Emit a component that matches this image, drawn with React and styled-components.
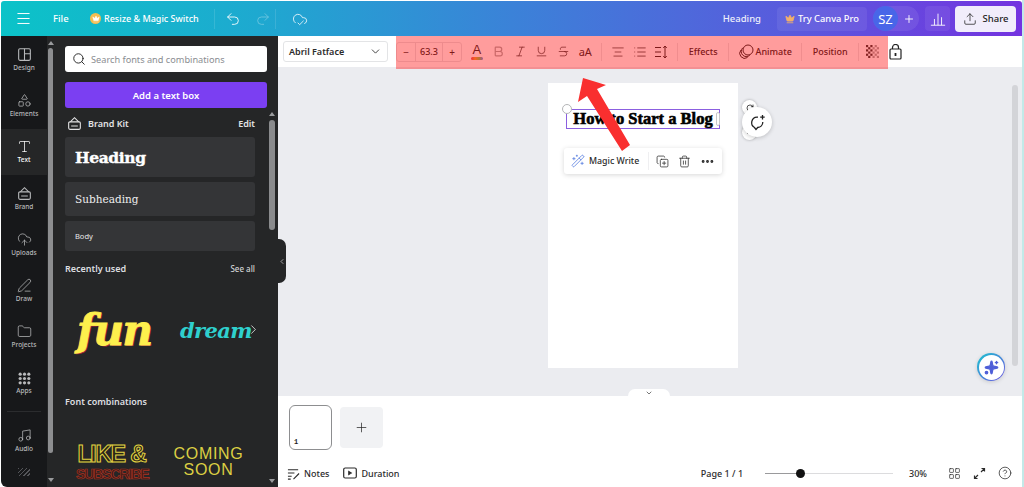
import React from "react";
import styled, { createGlobalStyle } from "styled-components";
import {
  AlignCenter, Bold, ChevronDown, ChevronLeft, ChevronRight, CircleHelp,
  CloudCheck, CloudUpload, CopyPlus, Crown, Ellipsis, Folder, Italic, LayoutGrid, List,
  Menu, Music, PenLine, Plus, Redo2, RotateCw, Search, Shapes, Sparkles,
  Strikethrough, Trash2, Type, Underline, Undo2, Upload, WandSparkles,
} from "lucide-react";

const GlobalStyle = createGlobalStyle`
  html, body { margin: 0; padding: 0; background: #fff; }
  body { font-family: "Noto Sans", "Open Sans", sans-serif; overflow: hidden; }
  * { box-sizing: border-box; }
`;

const BrandIcon = () => (
  <svg width="15" height="15" viewBox="0 0 18 18" fill="none" stroke="currentColor" strokeWidth="1.3">
    <rect x="2" y="7" width="14" height="9" rx="1.5" />
    <path d="M4 7l5-5 5 5M5 12h8" />
  </svg>
);
const DesignIcon = () => (
  <svg width="15" height="15" viewBox="0 0 18 18" fill="none" stroke="currentColor" strokeWidth="1.3">
    <rect x="2" y="2" width="14" height="14" rx="1.5" />
    <path d="M9 2v14M9 8h7" />
  </svg>
);
const DotsIcon = () => (
  <svg width="13" height="13" viewBox="0 0 18 18" fill="currentColor">
    {[3, 9, 15].flatMap((y) => [3, 9, 15].map((x) => <circle key={x + "-" + y} cx={x} cy={y} r="2.2" />))}
  </svg>
);
const NotesIcon = () => (
  <svg width="13" height="13" viewBox="0 0 14 14" fill="none" stroke="currentColor" strokeWidth="1.2">
    <path d="M1 3h11M1 6.500h7M1 10h4M1 13h3M7 13l6-6" />
  </svg>
);
const PlayBoxIcon = () => (
  <svg width="14" height="14" viewBox="0 0 14 14" fill="none" stroke="currentColor" strokeWidth="1.2">
    <rect x="0.700" y="2" width="12.600" height="10" rx="1.500" />
    <path d="M5.800 5.500v3l2.400-1.500z" fill="currentColor" />
  </svg>
);
const ExpandIcon = () => (
  <svg width="13" height="13" viewBox="0 0 13 13" fill="none" stroke="currentColor" strokeWidth="1.2">
    <path d="M8.500 1.500h3v3M11.500 1.500L8 5M4.500 11.500h-3v-3M1.500 11.500L5 8" />
  </svg>
);
const ChartIcon = () => (
  <svg width="16" height="16" viewBox="0 0 18 18" fill="none" stroke="currentColor" strokeWidth="1">
    <path d="M1 16h16M5 16V9M9 16V3M13 16V7" />
  </svg>
);
const SpacingIcon = () => (
  <svg width="14" height="14" viewBox="0 0 14 14" fill="none" stroke="currentColor" strokeWidth="1">
    <path d="M1 2.500h6M1 7h6M1 11.500h6M11 1v12M9.300 3L11 1l1.700 2M9.300 11l1.700 2 1.700-2" />
  </svg>
);
const CheckerIcon = () => (
  <svg width="13" height="13" viewBox="0 0 12 12" fill="#3a3a3a">
    {[0, 2, 4, 6, 8, 10].flatMap((y, r) =>
      [0, 2, 4, 6, 8, 10]
        .filter((_, c) => (c + r) % 2 === 0)
        .map((x) => <rect key={x + "-" + y} x={x} y={y} width="2" height="2" opacity={x > 5 ? 0.45 : 1} />)
    )}
  </svg>
);
const RingsIcon = () => (
  <svg width="15" height="15" viewBox="0 0 15 15" fill="none" stroke="currentColor" strokeWidth="1">
    <circle cx="9" cy="6" r="5" />
    <path d="M3.800 3.800a5 5 0 0 0 7 7.400M2 6a5 5 0 0 0 6.500 7.500" />
  </svg>
);
const CommentIcon = () => (
  <svg width="17" height="17" viewBox="0 0 17 17" fill="none" stroke="#222" strokeWidth="1.3">
    <path d="M9 3.200H8a5.500 5.500 0 0 0-2.500 10.300L7 15.500l1.700-2A5.500 5.500 0 0 0 13.800 8" />
    <path d="M13.500 1v4.500M11.200 3.200h4.500" />
  </svg>
);
const PadlockIcon = () => (
  <svg width="13" height="16" viewBox="0 0 13 16" fill="none" stroke="#222" strokeWidth="1.2">
    <rect x="1" y="5" width="11" height="10" rx="1" />
    <path d="M3.500 5V3.500a3 3 0 0 1 6 0V5" />
    <path d="M6.500 9v3" strokeWidth="1.800" />
  </svg>
);

const railItems = [
  { label: "Design", icon: <DesignIcon /> },
  { label: "Elements", icon: <Shapes size={15} strokeWidth={1.2} /> },
  { label: "Text", icon: <Type size={15} strokeWidth={1.2} />, active: true },
  { label: "Brand", icon: <BrandIcon /> },
  { label: "Uploads", icon: <CloudUpload size={15} strokeWidth={1.2} /> },
  { label: "Draw", icon: <PenLine size={15} strokeWidth={1.2} /> },
  { label: "Projects", icon: <Folder size={15} strokeWidth={1.2} /> },
  { label: "Apps", icon: <DotsIcon /> },
];

const App = () => {
  return (
    <>
      <GlobalStyle />
      <Frame>
        <TopBar>
          <BarGroup>
            <MenuSlot><Menu size={17} strokeWidth={1.4} /></MenuSlot>
            <BarText>File</BarText>
            <ResizeLink>
              <CrownBadge><Crown size={8} fill="#fff" strokeWidth={1} /></CrownBadge>
              Resize &amp; Magic Switch
            </ResizeLink>
            <BarDivider />
            <HistoryButton><Undo2 size={16} strokeWidth={1.3} /></HistoryButton>
            <HistoryButton $muted><Redo2 size={16} strokeWidth={1.3} /></HistoryButton>
            <BarDivider />
            <CloudSlot><CloudCheck size={16} strokeWidth={1.2} /></CloudSlot>
          </BarGroup>
          <BarGroup>
            <HeadingLabel>Heading</HeadingLabel>
            <ProButton><Crown size={10} fill="#f2b06b" color="#f2b06b" />Try Canva Pro</ProButton>
            <Team>
              <Avatar>SZ</Avatar>
              <TeamPlus><Plus size={12} strokeWidth={1.8} /></TeamPlus>
            </Team>
            <ChartButton><ChartIcon /></ChartButton>
            <ShareButton><Upload size={14} strokeWidth={1.3} />Share</ShareButton>
          </BarGroup>
        </TopBar>

        <Workspace>
          <Rail>
            {railItems.map((item) => (
              <RailItem key={item.label} $active={item.active}>
                {item.icon}
                <span>{item.label}</span>
              </RailItem>
            ))}
            <RailDivider />
            <RailItem>
              <Music size={15} strokeWidth={1.2} />
              <span>Audio</span>
            </RailItem>
            <RailHatch />
          </Rail>
          <RailScroll>
            <ScrollArrow $up />
            <RailThumb />
            <ScrollArrow />
          </RailScroll>

          <Panel>
            <SearchBox>
              <Search size={14} color="#222" strokeWidth={1.6} />
              <span>Search fonts and combinations</span>
            </SearchBox>
            <AddButton>Add a text box</AddButton>
            <KitRow>
              <KitTitle><BrandIcon />Brand Kit</KitTitle>
              <span>Edit</span>
            </KitRow>
            <StyleCards>
              <HeadingCard>Heading</HeadingCard>
              <SubCard>Subheading</SubCard>
              <BodyCard>Body</BodyCard>
            </StyleCards>
            <SectionRow>
              <SectionTitle>Recently used</SectionTitle>
              <SeeAll>See all</SeeAll>
            </SectionRow>
            <RecentRow>
              <FunText>fun</FunText>
              <DreamText>dream</DreamText>
              <RecentNext><ChevronRight size={15} strokeWidth={1.4} /></RecentNext>
            </RecentRow>
            <SectionTitle>Font combinations</SectionTitle>
            <CombosRow>
              <LikeBlock>
                <LikeText>LIKE &amp;</LikeText>
                <SubscribeText>SUBSCRIBE</SubscribeText>
              </LikeBlock>
              <ComingText>COMING<br />SOON</ComingText>
            </CombosRow>
            <PanelScroll>
              <ScrollArrow $up />
              <PanelThumb />
              <ScrollArrow />
            </PanelScroll>
          </Panel>

          <Main>
            <CollapseHandle><ChevronLeft size={9} strokeWidth={2} /></CollapseHandle>
            <Toolbar>
              <FontSelect>Abril Fatface<ChevronDown size={13} strokeWidth={1.6} /></FontSelect>
              <Tools>
                <SizeStepper>
                  <StepButton>−</StepButton>
                  <SizeValue>63.3</SizeValue>
                  <StepButton>+</StepButton>
                </SizeStepper>
                <ToolIcon>
                  <ColorA>A<ColorBar /></ColorA>
                </ToolIcon>
                <ToolIcon $faint><Bold size={13} strokeWidth={2.2} /></ToolIcon>
                <ToolIcon><Italic size={13} strokeWidth={1.3} /></ToolIcon>
                <ToolIcon><Underline size={13} strokeWidth={1.3} /></ToolIcon>
                <ToolIcon><Strikethrough size={13} strokeWidth={1.3} /></ToolIcon>
                <ToolIcon>aA</ToolIcon>
                <ToolDivider />
                <ToolIcon><AlignCenter size={14} strokeWidth={1.2} /></ToolIcon>
                <ToolIcon><List size={14} strokeWidth={1.3} /></ToolIcon>
                <ToolIcon><SpacingIcon /></ToolIcon>
                <ToolDivider />
                <ToolLabel $width={40}>Effects</ToolLabel>
                <ToolDivider />
                <ToolLabel $width={62}>
                  <RingsIcon />
                  Animate
                </ToolLabel>
                <ToolDivider />
                <ToolLabel $width={46}>Position</ToolLabel>
                <ToolDivider />
                <ToolIcon $width={16}><CheckerIcon /></ToolIcon>
              </Tools>
              <LockSlot><PadlockIcon /></LockSlot>
              <Highlight />
            </Toolbar>

            <Canvas>
              <Page>
                <TextSelection>
                  <CornerHandle />
                  How to Start a Blog
                  <SideHandle />
                </TextSelection>
                <FloatBar>
                  <MagicLabel>
                    <WandSparkles size={14} color="#5a7fe0" strokeWidth={1.4} />
                    Magic Write
                  </MagicLabel>
                  <FloatDivider />
                  <FloatIcons>
                    <CopyPlus size={13} strokeWidth={1.4} />
                    <Trash2 size={13} strokeWidth={1.4} />
                    <Ellipsis size={15} strokeWidth={2.6} />
                  </FloatIcons>
                </FloatBar>
                <RotateHandle $top={17}><RotateCw size={8} strokeWidth={2} /></RotateHandle>
                <RotateHandle $top={42}><Ellipsis size={8} strokeWidth={2} /></RotateHandle>
                <CommentButton><CommentIcon /></CommentButton>
              </Page>
              <CanvasScroll />
              <AssistantButton><AssistantInner><Sparkles size={15} color="#4f5fd8" fill="#4f5fd8" /></AssistantInner></AssistantButton>
              <HideTab><ChevronDown size={8} strokeWidth={2} /></HideTab>
            </Canvas>

            <Footer>
              <PagesRow>
                <PageThumb><span>1</span></PageThumb>
                <AddPage><Plus size={15} strokeWidth={1.2} /></AddPage>
              </PagesRow>
              <StatusRow>
                <StatusGroup>
                  <StatusItem><NotesIcon />Notes</StatusItem>
                  <StatusItem><PlayBoxIcon />Duration</StatusItem>
                </StatusGroup>
                <StatusGroup>
                  <PageCount>Page 1 / 1</PageCount>
                  <ZoomTrack><ZoomFill /><ZoomKnob /></ZoomTrack>
                  <ZoomValue>30%</ZoomValue>
                  <LayoutGrid size={13} strokeWidth={1.3} />
                  <ExpandIcon />
                  <CircleHelp size={14} strokeWidth={1.3} />
                </StatusGroup>
              </StatusRow>
            </Footer>
          </Main>
        </Workspace>

        <RedArrow width="60" height="80" viewBox="0 0 60 80">
          <polygon points="11,2 34,9 25,13 58,69 50,75 15,20 6,26" fill="#f92f2f" />
        </RedArrow>
      </Frame>
    </>
  );
};

export default App;

const Frame = styled.div`
  position: relative;
  width: 1023px;
  height: 487px;
  margin-left: 1px;
  padding-top: 1px;
  border-right: 2px solid #c3e9e8;
  display: flex;
  flex-direction: column;
  overflow: hidden;
`;
const TopBar = styled.header`
  height: 35px;
  flex: none;
  display: flex;
  justify-content: space-between;
  align-items: center;
  padding-right: 6px;
  color: #fff;
  background: linear-gradient(90deg, #0bc3c8 0%, #1ea9d0 25%, #3b82d8 50%, #5a59dd 78%, #7433e0 100%);
  border-radius: 3px 3px 0 0;
`;
const BarGroup = styled.div`
  display: flex;
  align-items: center;
  height: 100%;
`;
const MenuSlot = styled.div`
  width: 44px;
  padding-left: 14px;
  display: flex;
`;
const BarText = styled.span`
  width: 45px;
  padding-left: 8px;
  font-size: 9.500px;
  font-weight: 500;
`;
const ResizeLink = styled.div`
  display: flex;
  align-items: center;
  gap: 3px;
  width: 124px;
  font-size: 9px;
  font-weight: 500;
  white-space: nowrap;
`;
const CrownBadge = styled.span`
  width: 11px;
  height: 11px;
  border-radius: 50%;
  background: #f5bd4f;
  display: flex;
  align-items: center;
  justify-content: center;
`;
const BarDivider = styled.div`
  width: 1px;
  height: 20px;
  background: rgba(255, 255, 255, 0.12);
`;
const HistoryButton = styled.div`
  width: 30px;
  padding-left: 10px;
  display: flex;
  opacity: ${(p) => (p.$muted ? 0.35 : 1)};
`;
const CloudSlot = styled.div`
  padding-left: 16px;
  display: flex;
`;
const HeadingLabel = styled.span`
  font-size: 9.500px;
  font-weight: 500;
  margin-right: 16px;
  opacity: 0.9;
`;
const ProButton = styled.div`
  width: 90px;
  height: 24px;
  display: flex;
  align-items: center;
  justify-content: center;
  gap: 3px;
  font-size: 9.300px;
  font-weight: 500;
  background: rgba(255, 255, 255, 0.07);
  border-radius: 4px;
  margin-right: 6px;
`;
const Team = styled.div`
  display: flex;
  align-items: center;
  background: rgba(255, 255, 255, 0.08);
  border-radius: 13px;
  width: 46px;
  height: 25px;
  margin-right: 6px;
`;
const Avatar = styled.div`
  width: 25px;
  height: 25px;
  border-radius: 50%;
  background: #4866e8;
  font-size: 13px;
  display: flex;
  align-items: center;
  justify-content: center;
  flex: none;
`;
const TeamPlus = styled.div`
  flex: 1;
  display: flex;
  justify-content: center;
`;
const ChartButton = styled.div`
  width: 25px;
  height: 25px;
  display: flex;
  align-items: center;
  justify-content: center;
  background: rgba(255, 255, 255, 0.07);
  border-radius: 4px;
  margin-right: 5px;
`;
const ShareButton = styled.div`
  width: 61px;
  height: 26px;
  display: flex;
  align-items: center;
  justify-content: center;
  gap: 6px;
  font-size: 9.500px;
  font-weight: 500;
  color: #222;
  background: #f1edfb;
  border-radius: 4px;
`;
const Workspace = styled.div`
  flex: 1;
  min-height: 0;
  display: flex;
`;
const Rail = styled.nav`
  width: 46px;
  flex: none;
  background: #17181a;
  border-bottom-left-radius: 6px;
  display: flex;
  flex-direction: column;
`;
const RailItem = styled.div`
  height: 46.300px;
  flex: none;
  display: flex;
  flex-direction: column;
  align-items: center;
  justify-content: center;
  gap: 1px;
  color: ${(p) => (p.$active ? "#fff" : "#b8b9bb")};
  background: ${(p) => (p.$active ? "#252627" : "transparent")};
  span {
    font-size: 6.500px;
    font-weight: 500;
  }
`;
const RailDivider = styled.div`
  height: 1px;
  margin: 5px 6px 5px;
  background: #2b2c2e;
`;
const RailHatch = styled.div`
  width: 12px;
  height: 8px;
  margin: 4px auto 0;
  background: repeating-linear-gradient(135deg, #55565a 0 1px, transparent 1px 3px);
`;
const RailScroll = styled.div`
  width: 7px;
  flex: none;
  background: #252627;
  padding: 5px 1px 5px;
  display: flex;
  flex-direction: column;
  align-items: center;
`;
const RailThumb = styled.div`
  width: 5px;
  height: 405px;
  margin-top: 3px;
  background: #8d8e90;
  border-radius: 3px;
`;
const Panel = styled.aside`
  position: relative;
  width: 224px;
  flex: none;
  background: #252627;
  padding: 10px 10px 0 11px;
  overflow: hidden;
  color: #fff;
`;
const SearchBox = styled.div`
  width: 202px;
  height: 26px;
  background: #fff;
  border-radius: 3px;
  display: flex;
  align-items: center;
  gap: 5px;
  padding-left: 7px;
  font-size: 9.200px;
  color: #8a8d91;
`;
const AddButton = styled.div`
  width: 202px;
  height: 26px;
  margin-top: 10px;
  background: #7b3ff2;
  border-radius: 3px;
  display: flex;
  align-items: center;
  justify-content: center;
  font-size: 9.500px;
  font-weight: 600;
`;
const KitRow = styled.div`
  width: 190px;
  height: 28px;
  margin-top: 1px;
  display: flex;
  align-items: center;
  justify-content: space-between;
  font-size: 9px;
  font-weight: 600;
  color: #e3e3e4;
`;
const KitTitle = styled.div`
  display: flex;
  align-items: center;
  gap: 6px;
  padding-left: 2px;
`;
const StyleCards = styled.div`
  width: 190px;
  display: flex;
  flex-direction: column;
  gap: 5px;
`;
const StyleCard = styled.div`
  background: #343537;
  border-radius: 3px;
  display: flex;
  align-items: center;
  padding-left: 10px;
`;
const HeadingCard = styled(StyleCard)`
  height: 40px;
  font-family: "DejaVu Serif", "Liberation Serif", serif;
  font-weight: 700;
  font-size: 15.500px;
  letter-spacing: -0.4px;
  -webkit-text-stroke: 0.400px #fff;
`;
const SubCard = styled(StyleCard)`
  height: 34px;
  font-family: "DejaVu Serif", "Liberation Serif", serif;
  font-size: 10.500px;
  color: #eee;
`;
const BodyCard = styled(StyleCard)`
  height: 30px;
  font-size: 7.500px;
  color: #e8e8e8;
`;
const SectionRow = styled.div`
  width: 190px;
  margin-top: 11px;
  display: flex;
  align-items: center;
  justify-content: space-between;
`;
const SectionTitle = styled.div`
  font-size: 9px;
  font-weight: 600;
  line-height: 13px;
  color: #dedfe0;
`;
const SeeAll = styled.span`
  font-size: 8px;
  font-weight: 500;
  color: #d2d3d4;
`;
const RecentRow = styled.div`
  position: relative;
  height: 120px;
  width: 196px;
  display: flex;
  align-items: center;
  padding-bottom: 10px;
`;
const FunText = styled.div`
  width: 100px;
  padding-left: 12px;
  font-family: "DejaVu Serif", serif;
  font-size: 42px;
  font-weight: 700;
  font-style: italic;
  letter-spacing: -1.500px;
  color: #fdf04d;
  -webkit-text-stroke: 0.800px #fdf04d;
  text-shadow: 1px 1px 0 #a8243c, -1px 0 0 #a8243c;
`;
const DreamText = styled.div`
  padding-left: 15px;
  font-family: "DejaVu Serif", serif;
  font-size: 21px;
  font-weight: 700;
  font-style: italic;
  letter-spacing: -0.600px;
  color: #2fd0ce;
`;
const RecentNext = styled.div`
  position: absolute;
  right: 0;
  top: 47px;
  color: #ddd;
  display: flex;
`;
const CombosRow = styled.div`
  display: flex;
  align-items: center;
  margin-top: 34px;
  gap: 26px;
  padding-left: 11px;
`;
const LikeBlock = styled.div`
  width: 71px;
  text-align: center;
  font-family: "Liberation Sans", sans-serif;
  font-weight: 700;
`;
const LikeText = styled.div`
  font-size: 23px;
  line-height: 25px;
  letter-spacing: -1.200px;
  color: #2a2716;
  -webkit-text-stroke: 1px #e3d443;
  white-space: nowrap;
`;
const SubscribeText = styled.div`
  font-size: 14px;
  line-height: 15px;
  letter-spacing: -1.100px;
  color: #3a1a15;
  -webkit-text-stroke: 0.700px #a83324;
  white-space: nowrap;
`;
const ComingText = styled.div`
  width: 71px;
  font-family: "Liberation Sans", sans-serif;
  font-size: 16px;
  line-height: 16px;
  letter-spacing: 0.700px;
  text-align: center;
  color: #dccf43;
`;
const PanelScroll = styled.div`
  position: absolute;
  right: 3px;
  top: 76px;
  bottom: 4px;
  width: 6px;
  display: flex;
  flex-direction: column;
  align-items: center;
`;
const ScrollArrow = styled.div`
  width: 0;
  height: 0;
  flex: none;
  margin-top: ${(p) => (p.$up ? 0 : "auto")};
  border-left: 3px solid transparent;
  border-right: 3px solid transparent;
  border-bottom: ${(p) => (p.$up ? "4px solid #9a9b9d" : "none")};
  border-top: ${(p) => (p.$up ? "none" : "4px solid #9a9b9d")};
`;
const PanelThumb = styled.div`
  width: 6px;
  height: 110px;
  margin-top: 4px;
  border-radius: 3px;
  background: #8a8b8d;
`;
const Main = styled.main`
  position: relative;
  flex: 1;
  min-width: 0;
  display: flex;
  flex-direction: column;
`;
const CollapseHandle = styled.div`
  position: absolute;
  left: 0;
  top: 203px;
  width: 8px;
  height: 44px;
  z-index: 2;
  background: #252627;
  border-radius: 0 7px 7px 0;
  color: #ddd;
  display: flex;
  align-items: center;
  justify-content: center;
`;
const Toolbar = styled.div`
  position: relative;
  height: 31px;
  flex: none;
  background: #fff;
  display: flex;
  align-items: center;
  padding-left: 5px;
  color: #2b2b2b;
  z-index: 1;
`;
const FontSelect = styled.div`
  width: 105px;
  height: 21px;
  flex: none;
  border: 1px solid #e3e4e6;
  border-radius: 3px;
  display: flex;
  align-items: center;
  justify-content: space-between;
  padding: 0 5px;
  font-size: 9px;
  font-weight: 600;
  margin-right: 8px;
`;
const Tools = styled.div`
  flex: none;
  display: flex;
  align-items: center;
`;
const SizeStepper = styled.div`
  display: flex;
  align-items: stretch;
  flex: none;
  height: 20px;
  width: 66px;
  margin-right: 4px;
  border: 1px solid #e3e4e6;
  border-radius: 3px;
  font-size: 9px;
`;
const StepButton = styled.div`
  width: 18px;
  flex: none;
  display: flex;
  align-items: center;
  justify-content: center;
  font-size: 10px;
`;
const SizeValue = styled.div`
  flex: 1;
  display: flex;
  align-items: center;
  justify-content: center;
  border-left: 1px solid #e3e4e6;
  border-right: 1px solid #e3e4e6;
  font-weight: 500;
`;
const ToolIcon = styled.div`
  width: ${(p) => p.$width || 21.7}px;
  flex: none;
  display: flex;
  align-items: center;
  justify-content: center;
  font-size: 11px;
  font-weight: 400;
  opacity: ${(p) => (p.$faint ? 0.4 : 1)};
`;
const ToolDivider = styled.div`
  width: 1px;
  height: 18px;
  flex: none;
  margin: 0 5px;
  background: #e6e7e9;
`;
const ToolLabel = styled.div`
  width: ${(p) => p.$width}px;
  flex: none;
  display: flex;
  align-items: center;
  justify-content: center;
  gap: 2px;
  white-space: nowrap;
  font-size: 9px;
  font-weight: 500;
`;
const ColorA = styled.span`
  position: relative;
  font-family: "Liberation Sans", sans-serif;
  font-size: 13px;
  line-height: 14px;
  padding-bottom: 3px;
`;
const ColorBar = styled.span`
  position: absolute;
  left: -2px;
  right: -2px;
  bottom: 0;
  height: 3px;
  border-radius: 2px;
  background: linear-gradient(90deg, #e04f5f, #f2a33a, #8cc152, #5b8def);
`;
const LockSlot = styled.div`
  margin-left: 9px;
  display: flex;
`;
const Highlight = styled.div`
  position: absolute;
  left: 118px;
  top: 0;
  width: 492px;
  height: 33px;
  background: rgba(255, 0, 0, 0.39);
  pointer-events: none;
`;
const Canvas = styled.div`
  position: relative;
  flex: 1;
  min-height: 0;
  background: #ebecf0;
  padding: 16px 14px 0 0;
  display: flex;
  justify-content: center;
  align-items: flex-start;
`;
const Page = styled.div`
  position: relative;
  width: 190px;
  height: 285px;
  background: #fff;
  padding: 26px 18px 0;
  display: flex;
  flex-direction: column;
  align-items: center;
`;
const TextSelection = styled.div`
  position: relative;
  width: 154px;
  height: 20px;
  flex: none;
  border: 1.500px solid #8b5fe0;
  display: flex;
  align-items: center;
  justify-content: center;
  font-family: "Liberation Serif", serif;
  font-size: 16.500px;
  font-weight: 700;
  -webkit-text-stroke: 0.600px #000;
  white-space: nowrap;
  color: #000;
`;
const CornerHandle = styled.span`
  position: absolute;
  left: -5px;
  top: -6px;
  width: 10px;
  height: 10px;
  background: #fff;
  border: 1px solid #b5b6b8;
  border-radius: 50%;
`;
const SideHandle = styled.span`
  position: absolute;
  right: -1px;
  top: 2px;
  width: 4px;
  height: 14px;
  background: #fff;
  border: 1px solid #c8c9cb;
  border-radius: 2px;
`;
const FloatBar = styled.div`
  width: 158px;
  height: 26px;
  margin-top: 19px;
  flex: none;
  background: #fff;
  border-radius: 3px;
  box-shadow: 0 1px 5px rgba(0, 0, 0, 0.16);
  display: flex;
  align-items: center;
  color: #2b2b2b;
`;
const MagicLabel = styled.div`
  display: flex;
  align-items: center;
  gap: 4px;
  width: 84px;
  padding-left: 7px;
  font-size: 8.800px;
  font-weight: 500;
  white-space: nowrap;
`;
const FloatDivider = styled.div`
  width: 1px;
  height: 18px;
  background: #efeff1;
`;
const FloatIcons = styled.div`
  flex: 1;
  display: flex;
  align-items: center;
  justify-content: space-around;
  padding: 0 3px 0 3px;
`;
const RotateHandle = styled.div`
  position: absolute;
  left: 194px;
  top: ${(p) => p.$top}px;
  width: 15px;
  height: 15px;
  border-radius: 50%;
  background: #fff;
  box-shadow: 0 0 3px rgba(0, 0, 0, 0.3);
  display: flex;
  align-items: center;
  justify-content: center;
`;
const CommentButton = styled.div`
  position: absolute;
  left: 194px;
  top: 24px;
  width: 30px;
  height: 30px;
  border-radius: 50%;
  background: #fff;
  box-shadow: 0 1px 4px rgba(0, 0, 0, 0.2);
  display: flex;
  align-items: center;
  justify-content: center;
`;
const CanvasScroll = styled.div`
  position: absolute;
  right: 4px;
  top: 18px;
  bottom: 30px;
  width: 6px;
  border-radius: 3px;
  background: #d3d4d8;
`;
const AssistantButton = styled.div`
  position: absolute;
  right: 17px;
  bottom: 15px;
  width: 28px;
  height: 28px;
  padding: 1.500px;
  border-radius: 50%;
  background: linear-gradient(135deg, #1cc5d0, #6a4fe0);
  box-shadow: 0 1px 4px rgba(0, 0, 0, 0.15);
`;
const AssistantInner = styled.div`
  width: 100%;
  height: 100%;
  border-radius: 50%;
  background: #fff;
  display: flex;
  align-items: center;
  justify-content: center;
`;
const HideTab = styled.div`
  position: absolute;
  left: 350px;
  bottom: 0;
  width: 42px;
  height: 7px;
  background: #fff;
  border-radius: 8px 8px 0 0;
  display: flex;
  align-items: center;
  justify-content: center;
  color: #333;
`;
const Footer = styled.footer`
  height: 91px;
  flex: none;
  background: #fff;
  padding: 8px 10px 0 11px;
`;
const PagesRow = styled.div`
  height: 46px;
  display: flex;
  align-items: center;
  gap: 8px;
`;
const PageThumb = styled.div`
  position: relative;
  width: 43px;
  height: 45px;
  background: #fff;
  border: 1px solid #8d8e90;
  border-radius: 6px;
  span {
    position: absolute;
    left: 4px;
    bottom: 3px;
    font-family: "Liberation Mono", monospace;
    font-weight: 700;
    font-size: 7px;
    color: #222;
  }
`;
const AddPage = styled.div`
  width: 43px;
  height: 41px;
  background: #f1f2f4;
  border-radius: 4px;
  display: flex;
  align-items: center;
  justify-content: center;
  color: #2b2b2b;
`;
const StatusRow = styled.div`
  height: 16px;
  margin-top: 15px;
  display: flex;
  align-items: center;
  justify-content: space-between;
  color: #2b2b2b;
`;
const StatusGroup = styled.div`
  display: flex;
  align-items: center;
  gap: 12px;
`;
const StatusItem = styled.div`
  display: flex;
  align-items: center;
  gap: 4px;
  font-size: 9px;
  font-weight: 500;
  margin-left: -2px;
  margin-right: 4px;
`;
const PageCount = styled.span`
  font-size: 9px;
  font-weight: 500;
  margin-right: 10px;
  white-space: nowrap;
`;
const ZoomTrack = styled.div`
  position: relative;
  width: 128px;
  height: 1px;
  background: #dcdcde;
`;
const ZoomFill = styled.div`
  width: 35px;
  height: 100%;
  background: #9a9a9c;
`;
const ZoomKnob = styled.div`
  position: absolute;
  left: 31px;
  top: -4px;
  width: 9px;
  height: 9px;
  border-radius: 50%;
  background: #111;
`;
const ZoomValue = styled.span`
  font-size: 9px;
  font-weight: 500;
  margin-right: 9px;
  margin-left: 4px;
`;
const RedArrow = styled.svg`
  position: absolute;
  left: 571px;
  top: 76px;
  pointer-events: none;
  z-index: 3;
`;
